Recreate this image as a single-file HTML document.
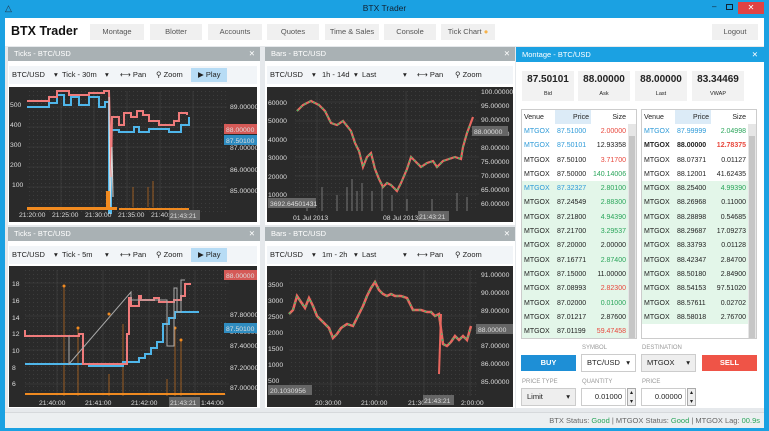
<!DOCTYPE html>
<html><head><meta charset="utf-8"><style>
*{margin:0;padding:0;box-sizing:border-box}
body{width:769px;height:431px;background:#1ba1e2;font-family:"Liberation Sans",sans-serif;position:relative;overflow:hidden;font-size:8px;color:#222}
.a{position:absolute}
.btn{position:absolute;top:24px;height:16px;background:#f0f0f0;color:#555;font-size:7.5px;text-align:center;line-height:16px}
.ph{position:absolute;height:14px;background:#a9b1b4;color:#fff;font-size:7.5px;line-height:14px;padding-left:6px}
.ph span{position:absolute;right:5px;top:0}
.tb{position:absolute;height:18px;background:#f2f5f8;font-size:7.5px;line-height:18px}
.tb i{font-style:normal;position:absolute}
.play{background:#b7dcf5;height:14px;top:2px;line-height:14px;padding:0 7px}
.chart{position:absolute;background:#2a2a2a}
.lbl{fill:#ddd;font-size:6.8px;font-family:"Liberation Sans",sans-serif}
table{border-collapse:collapse;font-size:7px;table-layout:fixed}
td{height:14.3px;padding:0 2px;white-space:nowrap;overflow:hidden}
.bl{color:#2d9ad8}.rd{color:#e8473c}.gr{color:#2aa55a}
.small{font-size:6px;color:#999;position:absolute}
.fld{position:absolute;background:#fff;border:1px solid #ccc;height:18px;font-size:7.5px;line-height:16px;padding-left:5px}
</style></head><body>
<div class="a" style="left:5px;top:3px;font-size:9px;color:#234">&#9651;</div>
<div class="a" style="left:0;width:769px;top:3px;text-align:center;font-size:8.5px;color:#123">BTX Trader</div>
<div class="a" style="left:712px;top:2px;font-size:8px;color:#123">&#8211;</div>
<div class="a" style="left:726px;top:4px;width:7px;height:6px;border:1px solid #123"></div>
<div class="a" style="left:738px;top:2px;width:26px;height:12px;background:#e04343;color:#fff;text-align:center;font-size:8px;line-height:12px">✕</div>
<div class="a" style="left:5px;top:18px;width:759px;height:410px;background:#e6e9ec"></div>
<div class="a" style="left:5px;top:18px;width:759px;height:28px;background:#fff"></div>
<div class="a" style="left:11px;top:24px;font-size:12.5px;font-weight:bold;color:#111">BTX Trader</div>
<div class="btn" style="left:90px;width:54px">Montage</div>
<div class="btn" style="left:150px;width:52px">Blotter</div>
<div class="btn" style="left:208px;width:54px">Accounts</div>
<div class="btn" style="left:267px;width:52px">Quotes</div>
<div class="btn" style="left:325px;width:54px">Time &amp; Sales</div>
<div class="btn" style="left:384px;width:52px">Console</div>
<div class="btn" style="left:441px;width:54px">Tick Chart <span style="color:#f6b24a">●</span></div>
<div class="btn" style="left:712px;width:46px">Logout</div>

<div class="a" style="left:8px;top:47px;width:252px;height:178px;background:#fff"></div>
<div class="a" style="left:265px;top:47px;width:250px;height:178px;background:#fff"></div>
<div class="a" style="left:8px;top:227px;width:252px;height:181px;background:#fff"></div>
<div class="a" style="left:265px;top:227px;width:250px;height:181px;background:#fff"></div>
<div class="ph" style="left:8px;top:47px;width:252px">Ticks - BTC/USD<span>✕</span></div>
<div class="ph" style="left:265px;top:47px;width:250px">Bars - BTC/USD<span>✕</span></div>
<div class="ph" style="left:8px;top:227px;width:252px">Ticks - BTC/USD<span>✕</span></div>
<div class="ph" style="left:265px;top:227px;width:250px">Bars - BTC/USD<span>✕</span></div>

<div class="tb" style="left:9px;top:66px;width:248px"><i style="left:3px">BTC/USD</i><i style="left:45px">▾</i><i style="left:53px">Tick - 30m</i><i style="left:96px">▾</i><i style="left:111px">⟷ Pan</i><i style="left:147px">⚲ Zoom</i><i class="play" style="left:182px">▶ Play</i></div>
<div class="tb" style="left:267px;top:66px;width:246px"><i style="left:3px">BTC/USD</i><i style="left:45px">▾</i><i style="left:55px">1h - 14d</i><i style="left:87px">▾</i><i style="left:95px">Last</i><i style="left:136px">▾</i><i style="left:150px">⟷ Pan</i><i style="left:188px">⚲ Zoom</i></div>
<div class="tb" style="left:9px;top:246px;width:248px"><i style="left:3px">BTC/USD</i><i style="left:45px">▾</i><i style="left:53px">Tick - 5m</i><i style="left:96px">▾</i><i style="left:111px">⟷ Pan</i><i style="left:147px">⚲ Zoom</i><i class="play" style="left:182px">▶ Play</i></div>
<div class="tb" style="left:267px;top:246px;width:246px"><i style="left:3px">BTC/USD</i><i style="left:45px">▾</i><i style="left:55px">1m - 2h</i><i style="left:87px">▾</i><i style="left:95px">Last</i><i style="left:136px">▾</i><i style="left:150px">⟷ Pan</i><i style="left:188px">⚲ Zoom</i></div>

<svg class="chart" style="left:9px;top:87px" width="248" height="135">
<defs><pattern id="g" width="4" height="4" patternUnits="userSpaceOnUse"><rect width="1" height="1" fill="#3c3c3c"/></pattern></defs>
<rect x="18" y="4" width="200" height="122" fill="url(#g)"/>
<g stroke="#444" stroke-width="0.6"><line x1="18" y1="20" x2="218" y2="20"/><line x1="18" y1="40" x2="218" y2="40"/><line x1="18" y1="60" x2="218" y2="60"/><line x1="18" y1="80" x2="218" y2="80"/><line x1="18" y1="100" x2="218" y2="100"/><line x1="52" y1="4" x2="52" y2="126"/><line x1="85" y1="4" x2="85" y2="126"/><line x1="118" y1="4" x2="118" y2="126"/><line x1="151" y1="4" x2="151" y2="126"/><line x1="184" y1="4" x2="184" y2="126"/></g>
<polyline fill="none" stroke="#4fb6ea" stroke-width="2" points="18,20 40,20 40,16 48,16 48,8 55,8 55,18 62,18 62,10 70,10 70,18 80,18 80,10 90,10 90,20 96,20 96,15 100,15 100,126 102,126 102,43 110,43 110,45 125,45 125,40 130,40 130,45 140,45 140,42 160,42 160,45 172,45 172,38 180,38 180,30"/>
<polyline fill="none" stroke="#f07b7b" stroke-width="2" points="18,14 40,14 40,10 48,10 48,4 60,4 60,8 80,8 80,6 95,6 95,4 100,4 102,90 103,30 110,30 110,38 115,38 115,26 122,26 122,30 128,30 128,24 134,24 134,28 140,28 140,34 150,34 150,38 165,38 165,34 170,34 170,26 178,26 178,28"/>
<polyline fill="none" stroke="#ddd" stroke-width="1" points="100,10 101,120 103,60 104,110"/>
<g fill="#f08a20"><rect x="18" y="120" width="90" height="3"/><rect x="110" y="121" width="70" height="2"/><rect x="97" y="104" width="4" height="16"/></g>
<g stroke="#b86a20" stroke-width="0.8"><line x1="124" y1="100" x2="124" y2="120"/><line x1="144" y1="94" x2="144" y2="120"/><line x1="139" y1="100" x2="139" y2="120"/></g>
<text class="lbl" x="1" y="20">500</text><text class="lbl" x="1" y="40">400</text><text class="lbl" x="1" y="60">300</text><text class="lbl" x="1" y="80">200</text><text class="lbl" x="3" y="100">100</text>
<text class="lbl" x="221" y="22">89.00000</text><text class="lbl" x="221" y="63">87.00000</text><text class="lbl" x="221" y="85">86.00000</text><text class="lbl" x="221" y="106">85.00000</text>
<rect x="215" y="37" width="33" height="10" fill="#d55a57"/><text class="lbl" x="217" y="45" fill="#fff">88.00000</text>
<rect x="215" y="48" width="33" height="10" fill="#2f8cc0"/><text class="lbl" x="217" y="56" fill="#fff">87.50100</text>
<text class="lbl" x="10" y="130">21:20:00</text><text class="lbl" x="43" y="130">21:25:00</text><text class="lbl" x="76" y="130">21:30:00</text><text class="lbl" x="109" y="130">21:35:00</text><text class="lbl" x="142" y="130">21:40:00</text>
<rect x="160" y="123" width="31" height="10" fill="#666"/><text class="lbl" x="161" y="131">21:43:21</text>
</svg>

<svg class="chart" style="left:267px;top:87px" width="246" height="135">
<rect x="28" y="4" width="184" height="120" fill="url(#g)"/>
<g stroke="#444" stroke-width="0.6"><line x1="28" y1="15" x2="212" y2="15"/><line x1="28" y1="34" x2="212" y2="34"/><line x1="28" y1="52" x2="212" y2="52"/><line x1="28" y1="70" x2="212" y2="70"/><line x1="28" y1="89" x2="212" y2="89"/><line x1="28" y1="107" x2="212" y2="107"/><line x1="50" y1="4" x2="50" y2="124"/><line x1="139" y1="4" x2="139" y2="124"/></g>
<g stroke="#777" stroke-width="1"><line x1="40" y1="124" x2="40" y2="112"/><line x1="55" y1="124" x2="55" y2="100"/><line x1="70" y1="124" x2="70" y2="108"/><line x1="80" y1="124" x2="80" y2="100"/><line x1="85" y1="124" x2="85" y2="92"/><line x1="90" y1="124" x2="90" y2="104"/><line x1="95" y1="124" x2="95" y2="96"/><line x1="105" y1="124" x2="105" y2="104"/><line x1="115" y1="124" x2="115" y2="100"/><line x1="125" y1="124" x2="125" y2="108"/><line x1="140" y1="124" x2="140" y2="112"/><line x1="165" y1="124" x2="165" y2="112"/><line x1="190" y1="124" x2="190" y2="106"/><line x1="200" y1="124" x2="200" y2="110"/></g>
<polyline fill="none" stroke="#e8675f" stroke-width="2.2" points="30,24 36,18 44,14 52,18 58,24 64,36 70,38 76,34 84,44 88,56 92,64 96,80 100,70 104,66 108,82 112,92 116,100 120,96 124,98 130,104 134,96 140,82 144,70 148,74 154,80 160,76 166,74 170,80 176,74 182,72 188,70 194,72 196,60 200,46 203,38 206,30"/>
<polyline fill="none" stroke="#2ec96b" stroke-width="1.2" stroke-dasharray="2,3" points="30,24 36,18 44,14 52,18 58,24 64,36 70,38 76,34 84,44 88,56 92,64 96,80 100,70 104,66 108,82 112,92 116,100 120,96 124,98 130,104 134,96 140,82 144,70 148,74 154,80 160,76 166,74 170,80 176,74 182,72 188,70 194,72 196,60 200,46 203,38"/>
<text class="lbl" x="1" y="18">60000</text><text class="lbl" x="1" y="36">50000</text><text class="lbl" x="1" y="55">40000</text><text class="lbl" x="1" y="73">30000</text><text class="lbl" x="1" y="92">20000</text><text class="lbl" x="1" y="110">10000</text>
<text class="lbl" x="214" y="7">100.00000</text><text class="lbl" x="214" y="21">95.00000</text><text class="lbl" x="214" y="35">90.00000</text><text class="lbl" x="214" y="49">85.00000</text><text class="lbl" x="214" y="63">80.00000</text><text class="lbl" x="214" y="77">75.00000</text><text class="lbl" x="214" y="91">70.00000</text><text class="lbl" x="214" y="105">65.00000</text><text class="lbl" x="214" y="119">60.00000</text>
<rect x="205" y="39" width="36" height="10" fill="#666"/><text class="lbl" x="207" y="47">88.00000</text>
<rect x="1" y="111" width="48" height="10" fill="#666"/><text class="lbl" x="3" y="119">3692.64501431</text>
<text class="lbl" x="26" y="133">01 Jul 2013</text><text class="lbl" x="116" y="133">08 Jul 2013</text>
<rect x="151" y="124" width="31" height="10" fill="#666"/><text class="lbl" x="152" y="132">21:43:21</text>
</svg>

<svg class="chart" style="left:9px;top:266px" width="248" height="141">
<rect x="16" y="4" width="204" height="126" fill="url(#g)"/>
<g stroke="#444" stroke-width="0.6"><line x1="16" y1="17" x2="220" y2="17"/><line x1="16" y1="50" x2="220" y2="50"/><line x1="16" y1="84" x2="220" y2="84"/><line x1="16" y1="118" x2="220" y2="118"/><line x1="48" y1="4" x2="48" y2="130"/><line x1="94" y1="4" x2="94" y2="130"/><line x1="140" y1="4" x2="140" y2="130"/><line x1="186" y1="4" x2="186" y2="130"/></g>
<g stroke="#b86a20" stroke-width="0.8"><line x1="55" y1="20" x2="55" y2="130"/><line x1="69" y1="62" x2="69" y2="130"/><line x1="100" y1="108" x2="100" y2="130"/><line x1="166" y1="62" x2="166" y2="130"/><line x1="172" y1="74" x2="172" y2="130"/><line x1="158" y1="113" x2="158" y2="130"/><line x1="114" y1="58" x2="114" y2="130"/></g>
<g fill="#f08a20"><circle cx="55" cy="20" r="1.5"/><circle cx="69" cy="62" r="1.5"/><circle cx="100" cy="48" r="1.5"/><circle cx="166" cy="62" r="1.5"/><circle cx="172" cy="74" r="1.5"/><rect x="16" y="127" width="200" height="2"/></g>
<polyline fill="none" stroke="#4fb6ea" stroke-width="2" points="16,98 80,98 80,100 114,100 114,96 130,96 130,92 136,92 136,88 142,88 142,82 148,82 148,76 154,76 154,58 160,58 160,52 166,52 166,46 190,46"/>
<polyline fill="none" stroke="#f07b7b" stroke-width="2" points="16,64 16,70 70,70 70,68 74,68 74,98 118,98 118,68 120,68 120,32 122,32 122,40 130,40 130,30 132,30 132,34 145,34 145,32 150,32 150,36 165,36 165,34 172,34 172,30 176,30 176,18 182,18"/>
<polyline fill="none" stroke="#aaa" stroke-width="1" points="60,70 60,98 122,26 122,34 158,34 158,80 165,80 165,22 168,22 168,46 172,46 172,14 176,14"/>
<text class="lbl" x="3" y="20">18</text><text class="lbl" x="3" y="37">16</text><text class="lbl" x="3" y="54">14</text><text class="lbl" x="3" y="70">12</text><text class="lbl" x="3" y="87">10</text><text class="lbl" x="3" y="104">8</text><text class="lbl" x="3" y="120">6</text>
<text class="lbl" x="221" y="51">87.80000</text><text class="lbl" x="221" y="68">87.60000</text><text class="lbl" x="221" y="82">87.40000</text><text class="lbl" x="221" y="104">87.20000</text><text class="lbl" x="221" y="124">87.00000</text>
<rect x="215" y="4" width="33" height="10" fill="#d55a57"/><text class="lbl" x="217" y="12">88.00000</text>
<rect x="215" y="57" width="33" height="10" fill="#2f8cc0"/><text class="lbl" x="217" y="65">87.50100</text>
<text class="lbl" x="30" y="139">21:40:00</text><text class="lbl" x="76" y="139">21:41:00</text><text class="lbl" x="122" y="139">21:42:00</text><text class="lbl" x="192" y="139">1:44:00</text>
<rect x="160" y="131" width="31" height="10" fill="#666"/><text class="lbl" x="161" y="139">21:43:21</text>
</svg>

<svg class="chart" style="left:267px;top:266px" width="246" height="141">
<rect x="22" y="4" width="188" height="126" fill="url(#g)"/>
<g stroke="#444" stroke-width="0.6"><line x1="22" y1="17" x2="210" y2="17"/><line x1="22" y1="50" x2="210" y2="50"/><line x1="22" y1="84" x2="210" y2="84"/><line x1="22" y1="118" x2="210" y2="118"/><line x1="64" y1="4" x2="64" y2="130"/><line x1="110" y1="4" x2="110" y2="130"/><line x1="157" y1="4" x2="157" y2="130"/><line x1="203" y1="4" x2="203" y2="130"/></g>
<polyline fill="none" stroke="#e8675f" stroke-width="2.5" points="22,48 26,44 30,30 34,36 38,42 42,32 46,40 50,50 56,56 62,62 66,72 70,68 74,62 80,58 86,60 92,48 96,40 100,30 104,22 108,16 112,24 116,28 120,30 124,28 128,30 134,30 140,32 146,44 150,44 154,44 160,46 164,46 168,50 172,48 176,78 180,80 184,76 188,70 192,74 196,70 200,74 204,60"/>
<polyline fill="none" stroke="#2ec96b" stroke-width="1.2" stroke-dasharray="2,4" points="22,48 26,44 30,30 34,36 38,42 42,32 46,40 50,50 56,56 62,62 66,72 70,68 74,62 80,58 86,60 92,48 96,40 100,30 104,22 108,16 112,24 116,28 120,30 124,28 128,30 134,30 140,32 146,44 150,44 154,44 160,46 164,46 168,50 172,48 176,78 180,80 184,76 188,70 192,74 196,70 200,74 204,60"/>
<line x1="174" y1="48" x2="172" y2="108" stroke="#e8675f" stroke-width="2"/>
<text class="lbl" x="1" y="21">3500</text><text class="lbl" x="1" y="37">3000</text><text class="lbl" x="1" y="53">2500</text><text class="lbl" x="1" y="69">2000</text><text class="lbl" x="1" y="85">1500</text><text class="lbl" x="1" y="101">1000</text><text class="lbl" x="1" y="117">500</text>
<text class="lbl" x="214" y="11">91.00000</text><text class="lbl" x="214" y="29">90.00000</text><text class="lbl" x="214" y="47">89.00000</text><text class="lbl" x="214" y="82">87.00000</text><text class="lbl" x="214" y="100">86.00000</text><text class="lbl" x="214" y="118">85.00000</text>
<rect x="209" y="58" width="37" height="10" fill="#666"/><text class="lbl" x="211" y="66">88.00000</text>
<rect x="1" y="119" width="44" height="10" fill="#666"/><text class="lbl" x="3" y="127">20.1030956</text>
<text class="lbl" x="48" y="139">20:30:00</text><text class="lbl" x="94" y="139">21:00:00</text><text class="lbl" x="141" y="139">21:30</text><text class="lbl" x="194" y="139">2:00:00</text>
<rect x="156" y="129" width="31" height="10" fill="#666"/><text class="lbl" x="157" y="137">21:43:21</text>
</svg>

<div class="a" style="left:516px;top:47px;width:248px;height:361px;background:#fff"></div>
<div class="a" style="left:516px;top:47px;width:248px;height:15px;background:#1ba1e2;color:#fff;font-size:7.5px;line-height:15px;padding-left:6px">Montage - BTC/USD<span style="position:absolute;right:6px">✕</span></div>
<div class="a" style="left:522px;top:71px;width:236px;height:30px;font-size:10px;font-weight:bold">
<div class="a" style="left:0;width:52px;height:30px;background:#f2f2f2;text-align:center;line-height:18px">87.50101<div style="font-size:5.5px;font-weight:normal;line-height:10px">Bid</div></div>
<div class="a" style="left:56px;width:52px;height:30px;background:#f2f2f2;text-align:center;line-height:18px">88.00000<div style="font-size:5.5px;font-weight:normal;line-height:10px">Ask</div></div>
<div class="a" style="left:113px;width:52px;height:30px;background:#f2f2f2;text-align:center;line-height:18px">88.00000<div style="font-size:5.5px;font-weight:normal;line-height:10px">Last</div></div>
<div class="a" style="left:170px;width:52px;height:30px;background:#f2f2f2;text-align:center;line-height:18px">83.34469<div style="font-size:5.5px;font-weight:normal;line-height:10px">VWAP</div></div>
</div>

<div class="a" style="left:521px;top:109px;width:116px;height:230px;border:1px solid #ccc;overflow:hidden">
<div class="a" style="right:0;top:14px;width:8px;height:216px;background:#e6e6e6"></div>
<div class="a" style="right:1px;top:26px;width:6px;height:202px;background:#c6c6c6"></div>
<table style="width:106px"><col style="width:33px"><col style="width:36px"><col style="width:37px"><tr style="height:14px"><td>Venue</td><td style="background:#dcebf7;text-align:right">Price</td><td style="text-align:right">Size</td></tr>
<tr><td class="bl">MTGOX</td><td class="bl">87.51000</td><td class="rd" style="text-align:right">2.00000</td></tr>
<tr><td class="bl">MTGOX</td><td class="bl">87.50101</td><td style="text-align:right">12.93358</td></tr>
<tr><td>MTGOX</td><td>87.50100</td><td class="rd" style="text-align:right">3.71700</td></tr>
<tr><td>MTGOX</td><td>87.50000</td><td class="gr" style="text-align:right">140.14006</td></tr>
<tbody style="background:#e3f6e9">
<tr><td class="bl">MTGOX</td><td class="bl">87.32327</td><td class="gr" style="text-align:right">2.80100</td></tr>
<tr><td>MTGOX</td><td>87.24549</td><td class="gr" style="text-align:right">2.88300</td></tr>
<tr><td>MTGOX</td><td>87.21800</td><td class="gr" style="text-align:right">4.94390</td></tr>
<tr><td>MTGOX</td><td>87.21700</td><td class="gr" style="text-align:right">3.29537</td></tr>
<tr><td>MTGOX</td><td>87.20000</td><td style="text-align:right">2.00000</td></tr>
<tr><td>MTGOX</td><td>87.16771</td><td class="gr" style="text-align:right">2.87400</td></tr>
<tr><td>MTGOX</td><td>87.15000</td><td style="text-align:right">11.00000</td></tr>
<tr><td>MTGOX</td><td>87.08993</td><td class="rd" style="text-align:right">2.82300</td></tr>
<tr><td>MTGOX</td><td>87.02000</td><td class="gr" style="text-align:right">0.01000</td></tr>
<tr><td>MTGOX</td><td>87.01217</td><td style="text-align:right">2.87600</td></tr>
<tr><td>MTGOX</td><td>87.01199</td><td class="rd" style="text-align:right">59.47458</td></tr></tbody></table></div>

<div class="a" style="left:641px;top:109px;width:116px;height:230px;border:1px solid #ccc;overflow:hidden">
<div class="a" style="right:0;top:14px;width:8px;height:216px;background:#e6e6e6"></div>
<div class="a" style="right:1px;top:26px;width:6px;height:202px;background:#c6c6c6"></div>
<table style="width:106px"><col style="width:33px"><col style="width:36px"><col style="width:37px"><tr style="height:14px"><td>Venue</td><td style="background:#dcebf7;text-align:right">Price</td><td style="text-align:right">Size</td></tr>
<tr><td class="bl">MTGOX</td><td class="bl">87.99999</td><td class="gr" style="text-align:right">2.04998</td></tr>
<tr style="font-weight:bold"><td>MTGOX</td><td>88.00000</td><td class="rd" style="text-align:right">12.78375</td></tr>
<tr><td>MTGOX</td><td>88.07371</td><td style="text-align:right">0.01127</td></tr>
<tr><td>MTGOX</td><td>88.12001</td><td style="text-align:right">41.62435</td></tr>
<tbody style="background:#e3f6e9">
<tr><td>MTGOX</td><td>88.25400</td><td class="gr" style="text-align:right">4.99390</td></tr>
<tr><td>MTGOX</td><td>88.26968</td><td style="text-align:right">0.11000</td></tr>
<tr><td>MTGOX</td><td>88.28898</td><td style="text-align:right">0.54685</td></tr>
<tr><td>MTGOX</td><td>88.29687</td><td style="text-align:right">17.09273</td></tr>
<tr><td>MTGOX</td><td>88.33793</td><td style="text-align:right">0.01128</td></tr>
<tr><td>MTGOX</td><td>88.42347</td><td style="text-align:right">2.84700</td></tr>
<tr><td>MTGOX</td><td>88.50180</td><td style="text-align:right">2.84900</td></tr>
<tr><td>MTGOX</td><td>88.54153</td><td style="text-align:right">97.51020</td></tr>
<tr><td>MTGOX</td><td>88.57611</td><td style="text-align:right">0.02702</td></tr>
<tr><td>MTGOX</td><td>88.58018</td><td style="text-align:right">2.76700</td></tr></tbody></table></div>

<div class="small" style="left:582px;top:345px">SYMBOL</div>
<div class="small" style="left:642px;top:345px">DESTINATION</div>
<div class="a" style="left:521px;top:355px;width:55px;height:16px;background:#1e8fd6;color:#fff;font-weight:bold;font-size:7.5px;text-align:center;line-height:16px">BUY</div>
<div class="fld" style="left:581px;top:354px;width:55px">BTC/USD<span style="position:absolute;right:5px">▾</span></div>
<div class="fld" style="left:641px;top:354px;width:55px;background:#eee">MTGOX<span style="position:absolute;right:5px">▾</span></div>
<div class="a" style="left:702px;top:355px;width:55px;height:16px;background:#ef5447;color:#fff;font-weight:bold;font-size:7.5px;text-align:center;line-height:16px">SELL</div>
<div class="small" style="left:522px;top:379px">PRICE TYPE</div>
<div class="small" style="left:582px;top:379px">QUANTITY</div>
<div class="small" style="left:642px;top:379px">PRICE</div>
<div class="fld" style="left:521px;top:388px;width:55px;background:#eee">Limit<span style="position:absolute;right:5px">▾</span></div>
<div class="fld" style="left:581px;top:388px;width:45px;text-align:right;padding-right:3px">0.01000</div>
<div class="a" style="left:627px;top:388px;width:9px;height:18px;font-size:6px;line-height:9px;text-align:center;border:1px solid #aaa;background:#eee">▴<br>▾</div>
<div class="fld" style="left:641px;top:388px;width:45px;text-align:right;padding-right:3px">0.00000</div>
<div class="a" style="left:687px;top:388px;width:9px;height:18px;font-size:6px;line-height:9px;text-align:center;border:1px solid #aaa;background:#eee">▴<br>▾</div>

<div class="a" style="left:5px;top:412px;width:759px;height:16px;background:#eceff1;border-top:1px solid #d6d9dc;font-size:7.5px;line-height:15px;color:#666;text-align:right;padding-right:4px">BTX Status: <span class="gr">Good</span> | MTGOX Status: <span class="gr">Good</span> | MTGOX Lag: <span class="gr">00.9s</span></div>
</body></html>
